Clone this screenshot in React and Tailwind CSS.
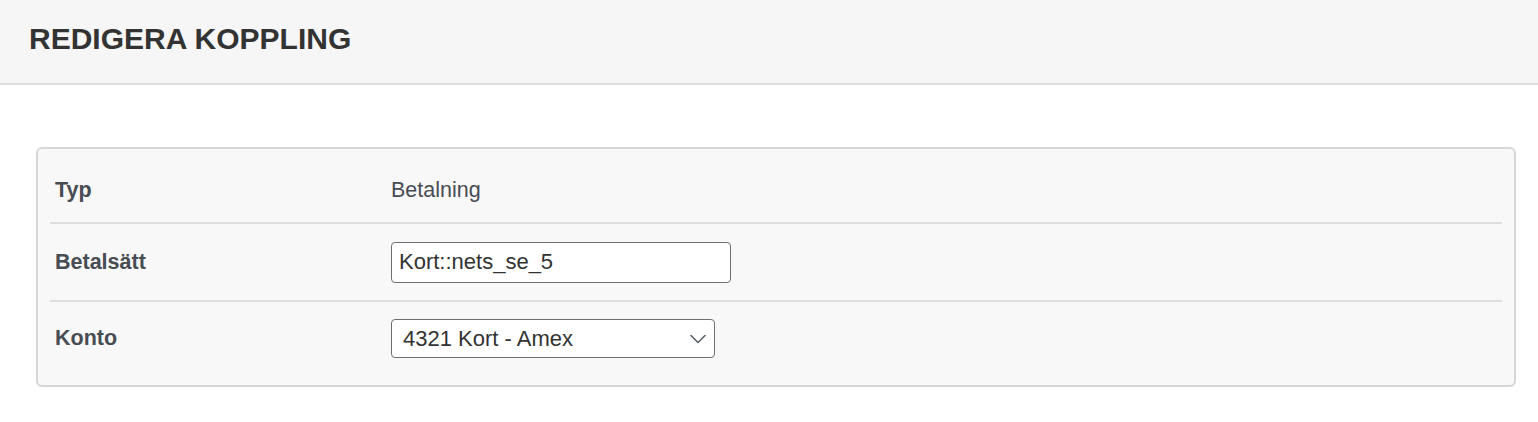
// App.jsx - edit mapping page

import React from 'react';

const font = { fontFamily: '"Liberation Sans", Arial, Helvetica, sans-serif' };

// One label / value row of the form table
const Row = ({ label, children, className }) => (
  <div className={`grid grid-cols-[341px_1fr] items-center ${className}`}>
    <div className="pl-[5px] text-[21.5px] font-bold text-[#484c53]">{label}</div>
    <div className="flex items-center">{children}</div>
  </div>
);

const App = () => {
  return (
    <div className="min-h-[422px] bg-white" style={font}>
      {/* Page header */}
      <div className="h-[85px] bg-[#f6f6f6] border-b-2 border-[#dcdcdc] px-[29px] pt-[24px]">
        <h1 className="text-[30px] leading-[30px] font-bold text-[#333333]">REDIGERA KOPPLING</h1>
      </div>

      {/* Form card */}
      <div className="mt-[62px] ml-[36px] mr-[22px] rounded-[6px] border-2 border-[#d6d6d6] bg-[#f8f8f8] px-[12px] pt-[10px] pb-[10px]">
        <Row label="Typ" className="h-[63px]">
          <span className="text-[21.5px] text-[#484c53]">Betalning</span>
        </Row>

        <Row label="Betalsätt" className="h-[78px] border-t-2 border-[#dedede]">
          <input
            type="text"
            defaultValue="Kort::nets_se_5"
            className="w-[340px] h-[41px] rounded-[4px] border-[1.5px] border-[#6e6e6e] bg-white pl-[7px] text-[22px] text-[#333333] outline-none"
            style={font}
          />
        </Row>

        <Row label="Konto" className="h-[75px] border-t-2 border-[#dedede]">
          <div className="relative w-[324px] h-[39px]">
            <select
              defaultValue="4321"
              className="appearance-none w-full h-full rounded-[4px] border-[1.5px] border-[#6e6e6e] bg-white pl-[11px] text-[22px] text-[#333333] outline-none"
              style={font}
            >
              <option value="4321">4321 Kort - Amex</option>
            </select>
            <svg
              className="absolute right-[9px] top-[15px] pointer-events-none"
              width="16"
              height="10"
              viewBox="0 0 16 10"
              fill="none"
            >
              <path d="M1 1.5 L8 8.5 L15 1.5" stroke="#555a62" strokeWidth="1.5" strokeLinecap="round" strokeLinejoin="round" />
            </svg>
          </div>
        </Row>
      </div>
    </div>
  );
};

export default App;
